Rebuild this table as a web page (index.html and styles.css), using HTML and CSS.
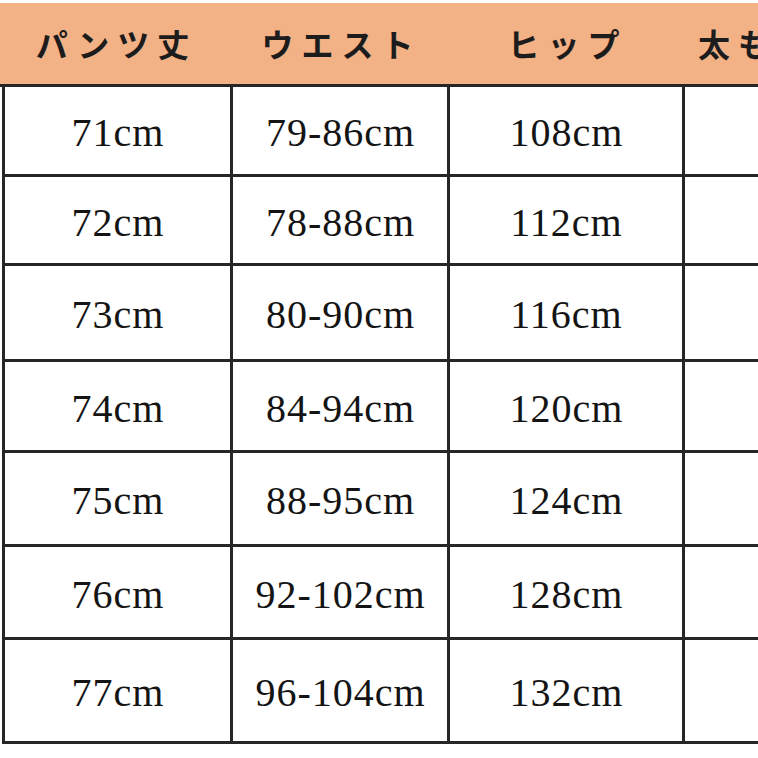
FILE: index.html
```html
<!DOCTYPE html>
<html lang="ja">
<head>
<meta charset="utf-8">
<title>サイズ表</title>
<link rel="stylesheet" href="styles.css">
</head>
<body>
<div class="chart">
  <div class="head">パンツ丈</div>
  <div class="head">ウエスト</div>
  <div class="head">ヒップ</div>
  <div class="head head-left">太もも</div>

  <div class="cell first">71cm</div><div class="cell">79-86cm</div><div class="cell">108cm</div><div class="cell"></div>
  <div class="cell first">72cm</div><div class="cell">78-88cm</div><div class="cell">112cm</div><div class="cell"></div>
  <div class="cell first">73cm</div><div class="cell">80-90cm</div><div class="cell">116cm</div><div class="cell"></div>
  <div class="cell first">74cm</div><div class="cell">84-94cm</div><div class="cell">120cm</div><div class="cell"></div>
  <div class="cell first">75cm</div><div class="cell">88-95cm</div><div class="cell">124cm</div><div class="cell"></div>
  <div class="cell first">76cm</div><div class="cell">92-102cm</div><div class="cell">128cm</div><div class="cell"></div>
  <div class="cell first">77cm</div><div class="cell">96-104cm</div><div class="cell">132cm</div><div class="cell"></div>
</div>
</body>
</html>
```
FILE: styles.css
```css
html, body {
  margin: 0;
  padding: 0;
  background: #ffffff;
  overflow: hidden;
}

.chart {
  margin-top: 3px;
  width: 920px;
  display: grid;
  grid-template-columns: 233px 217px 235px 235px;
  grid-template-rows: 84px 90px 89px 96px 91px 94px 93px 104px;
}

.head {
  box-sizing: border-box;
  background: #f3b186;
  border-bottom: 3px solid #262626;
  display: flex;
  align-items: center;
  justify-content: center;
  padding-bottom: 2px;
  font-family: "Noto Sans CJK JP", "Noto Sans", sans-serif;
  font-weight: 700;
  font-size: 32px;
  letter-spacing: 8px;
  color: #1c1c1c;
}

.head-left {
  justify-content: flex-start;
  padding-left: 13px;
}

.cell {
  box-sizing: border-box;
  border-right: 3px solid #262626;
  border-bottom: 3px solid #262626;
  display: flex;
  align-items: center;
  justify-content: center;
  padding-top: 4px;
  padding-left: 1px;
  font-family: "Liberation Serif", "Times New Roman", serif;
  font-size: 40px;
  letter-spacing: 1px;
  color: #141414;
}

.first {
  margin-left: 2px;
  border-left: 3px solid #262626;
}
```
